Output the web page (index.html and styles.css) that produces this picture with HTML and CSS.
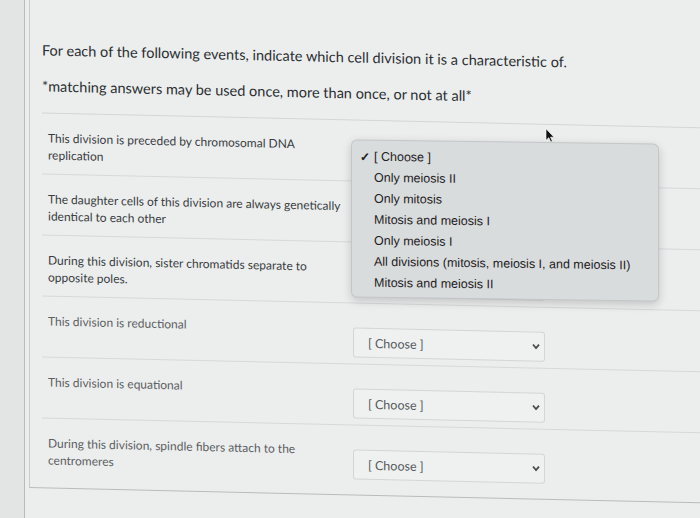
FILE: index.html
```html
<!DOCTYPE html>
<html lang="en">
<head>
    <meta charset="UTF-8">
    <meta name="viewport" content="width=device-width, initial-scale=1.0">
    <title>Matching Question</title>
    <link rel="stylesheet" href="styles.css">
</head>
<body>
    <div class="screen">
        <aside class="rail"></aside>

        <main class="content">
            <div class="question">
                <div class="question-text">
                    <p>For each of the following events, indicate which cell division it is a characteristic of.</p>
                    <p>*matching answers may be used once, more than once, or not at all*</p>
                </div>

                <div class="answers">
                    <div class="match-row">
                        <div class="match-label">This division is preceded by chromosomal DNA replication</div>
                        <div class="match-select"><span>[ Choose ]</span><svg class="chevron" viewBox="0 0 8 6"><polyline points="1,1 4,4.5 7,1"/></svg></div>
                    </div>
                    <div class="match-row">
                        <div class="match-label">The daughter cells of this division are always genetically identical to each other</div>
                        <div class="match-select"><span>[ Choose ]</span><svg class="chevron" viewBox="0 0 8 6"><polyline points="1,1 4,4.5 7,1"/></svg></div>
                    </div>
                    <div class="match-row">
                        <div class="match-label">During this division, sister chromatids separate to opposite poles.</div>
                        <div class="match-select"><span>[ Choose ]</span><svg class="chevron" viewBox="0 0 8 6"><polyline points="1,1 4,4.5 7,1"/></svg></div>
                    </div>
                    <div class="match-row faded">
                        <div class="match-label">This division is reductional</div>
                        <div class="match-select"><span>[ Choose ]</span><svg class="chevron" viewBox="0 0 8 6"><polyline points="1,1 4,4.5 7,1"/></svg></div>
                    </div>
                    <div class="match-row faded">
                        <div class="match-label">This division is equational</div>
                        <div class="match-select"><span>[ Choose ]</span><svg class="chevron" viewBox="0 0 8 6"><polyline points="1,1 4,4.5 7,1"/></svg></div>
                    </div>
                    <div class="match-row faded last">
                        <div class="match-label">During this division, spindle fibers attach to the centromeres</div>
                        <div class="match-select"><span>[ Choose ]</span><svg class="chevron" viewBox="0 0 8 6"><polyline points="1,1 4,4.5 7,1"/></svg></div>
                    </div>
                </div>

                <ul class="popup">
                    <li class="checked">[ Choose ]</li>
                    <li>Only meiosis II</li>
                    <li>Only mitosis</li>
                    <li>Mitosis and meiosis I</li>
                    <li>Only meiosis I</li>
                    <li>All divisions (mitosis, meiosis I, and meiosis II)</li>
                    <li>Mitosis and meiosis II</li>
                </ul>

                <svg class="cursor" viewBox="0 0 10 15">
                    <path d="M1 1 L1 12.5 L3.8 9.8 L5.8 14 L7.4 13.3 L5.5 9.2 L9 9.2 Z"/>
                </svg>
            </div>
        </main>
    </div>
</body>
</html>
```

FILE: styles.css
```css
body {
    margin: 0;
    background-color: #eceeee;
    font-family: Lato, "Open Sans", sans-serif;
    color: #2b2f31;
    overflow: hidden;
}
.screen {
    display: flex;
    height: 518px;
}
.rail {
    width: 24px;
    flex-shrink: 0;
    background-color: #e3e5e5;
    border-right: 1px solid #b8bbbb;
}
.content {
    flex: 1;
    padding-left: 4px;
    transform: skewY(1.3deg);
    transform-origin: 0 0;
}
.question {
    position: relative;
    border-left: 1px solid #c9cccc;
    border-bottom: 1px solid #b9bcbc;
    padding: 0 0 0 12px;
    height: 488px;
    box-sizing: border-box;
}
.question-text {
    padding: 40px 0 16px;
    border-bottom: 1px solid #d3d6d6;
}
.question-text p {
    margin: 0;
    font-size: 14.5px;
    line-height: 20px;
}
.question-text p + p {
    margin-top: 16px;
}
.match-row {
    display: flex;
    align-items: flex-start;
    height: 60px;
    border-bottom: 1px solid #d6d9d9;
    padding-left: 6px;
}
.match-row.last {
    border-bottom: none;
}
.match-label {
    width: 302px;
    padding-top: 16px;
    font-size: 12px;
    line-height: 17px;
    color: #3a3d3f;
}
.faded .match-label {
    color: #5c6062;
}
.match-select {
    margin: 24px 0 0 3px;
    width: 192px;
    height: 30px;
    box-sizing: border-box;
    border: 1px solid #d3d6d6;
    border-radius: 3px;
    background-color: #eff1f1;
    display: flex;
    align-items: center;
    justify-content: space-between;
    padding: 0 4px 0 14px;
    font-size: 12.5px;
    color: #55595b;
}
.chevron {
    width: 8px;
    height: 6px;
    fill: none;
    stroke: #4a4d4f;
    stroke-width: 1.8;
}
.popup {
    position: absolute;
    left: 321px;
    top: 132px;
    width: 306px;
    margin: 0;
    padding: 6px 0 3px;
    list-style: none;
    background-color: #d9dcdd;
    border: 1px solid #c4c7c8;
    border-radius: 6px;
    box-shadow: 0 3px 10px rgba(0, 0, 0, 0.18);
    font-family: "Liberation Sans", Arial, sans-serif;
    font-size: 12.5px;
    color: #1f2123;
    transform: skewY(-0.5deg);
    transform-origin: 0 0;
}
.popup li {
    height: 21px;
    line-height: 21px;
    padding-left: 22px;
    position: relative;
}
.popup li.checked::before {
    content: "\2713";
    position: absolute;
    left: 8px;
    font-size: 12px;
    font-weight: bold;
}
.cursor {
    position: absolute;
    left: 515px;
    top: 116px;
    width: 10px;
    height: 15px;
    fill: #111;
    stroke: #fff;
    stroke-width: 0.6;
}
```
